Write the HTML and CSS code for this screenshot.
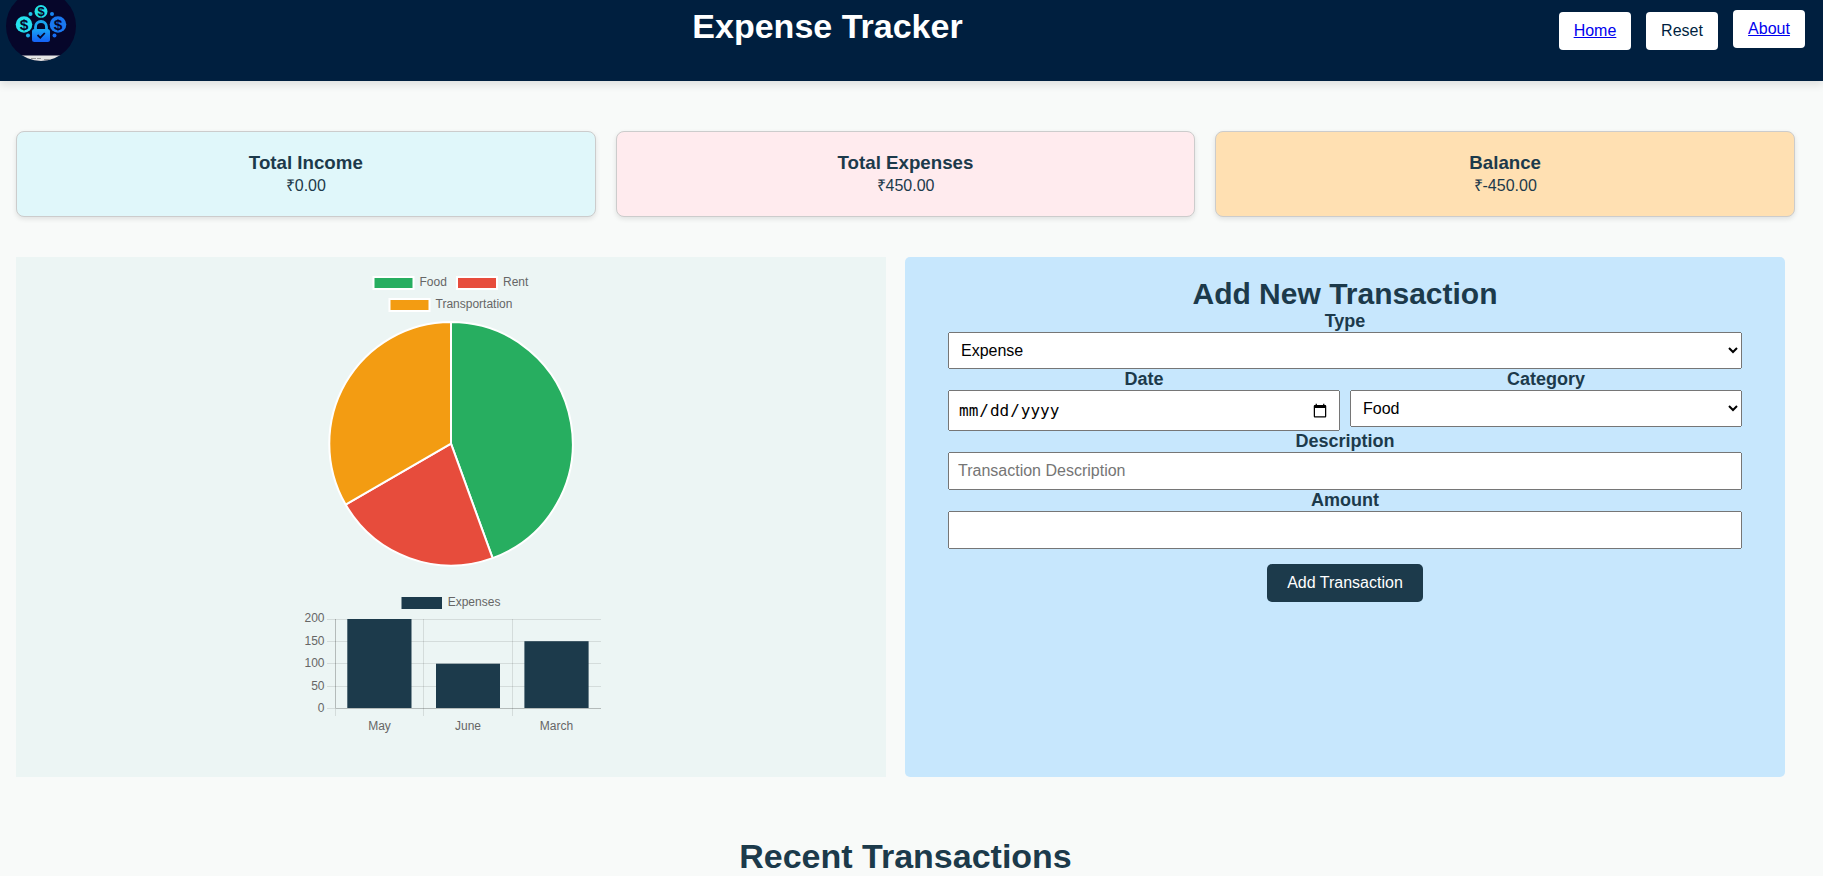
FILE: index.html
```html
<!DOCTYPE html>
<html lang="en">
<head>
<meta charset="utf-8">
<title>Expense Tracker</title>
<link rel="stylesheet" href="styles.css">
</head>
<body>
<header class="header">
  <svg class="logo" viewBox="0 0 70 70" width="70" height="70">
    <defs>
      <clipPath id="disc"><circle cx="35" cy="35" r="35"/></clipPath>
      <linearGradient id="glow" gradientUnits="userSpaceOnUse" x1="12" y1="22" x2="56" y2="40">
        <stop offset="0" stop-color="#25f0e4"/><stop offset=".5" stop-color="#1a9af0"/><stop offset="1" stop-color="#1560f5"/>
      </linearGradient>
      <linearGradient id="lock" x1="0" y1="0" x2="0" y2="1">
        <stop offset="0" stop-color="#18a5f5"/><stop offset="1" stop-color="#1560f5"/>
      </linearGradient>
    </defs>
    <g clip-path="url(#disc)">
      <rect width="70" height="70" fill="#06062a"/>
      <rect y="64.5" width="70" height="6" fill="#e4e4e4"/>
      <path d="M25 67.5h5m1 0h4m3 1h7" stroke="#999" stroke-width="1.2"/>
      <circle cx="35" cy="20.500" r="6.500" fill="#22dfe6"/>
      <circle cx="18" cy="33.500" r="8.300" fill="#25e0ee"/>
      <circle cx="52" cy="33.500" r="8.300" fill="#1a78f0"/>
      <g fill="url(#glow)"><circle cx="24.500" cy="23" r="2"/><circle cx="46" cy="23" r="2"/><circle cx="22" cy="44.500" r="2"/><circle cx="48.500" cy="44.500" r="2"/></g>
      <path d="M29.500 40v-4a5.500 5.500 0 0 1 11 0V40" fill="none" stroke="#1aa6ee" stroke-width="2.800"/>
      <rect x="26" y="38" width="18" height="13" rx="2.500" fill="url(#lock)"/>
      <path d="M31.500 44l2.800 2.700 4.500-4.700" fill="none" stroke="#06062a" stroke-width="1.800"/>
      <g class="coin"><text x="35" y="25" font-size="13">$</text><text x="18" y="39" font-size="15.500">$</text><text x="52" y="39" font-size="15.500">$</text></g>
    </g>
  </svg>
  <h1 class="brand">Expense Tracker</h1>
  <nav class="nav">
    <button class="nav-btn"><a href="#">Home</a></button>
    <button class="nav-btn">Reset</button>
    <button class="nav-btn nav-btn-raised"><a href="#">About</a></button>
  </nav>
</header>
<main class="main">
  <section class="summary">
    <div class="card income"><h3>Total Income</h3><p>₹0.00</p></div>
    <div class="card expenses"><h3>Total Expenses</h3><p>₹450.00</p></div>
    <div class="card balance"><h3>Balance</h3><p>₹-450.00</p></div>
  </section>
  <section class="panels">
    <div class="charts">
      <svg class="chart pie" width="300" height="300" viewBox="0 0 300 300">
        <g stroke="#fff" stroke-width="2">
          <rect x="72.500" y="5" width="40" height="12" fill="#27ae60"/>
          <rect x="156" y="5" width="40" height="12" fill="#e74c3c"/>
          <rect x="88.500" y="27" width="40" height="12" fill="#f39c12"/>
          <g stroke-linejoin="bevel">
            <path d="M150 171.700V50a121.700 121.700 0 0 1 41.600 236.100Z" fill="#27ae60"/>
            <path d="M150 171.700L191.600 286.100A121.700 121.700 0 0 1 44.600 232.550Z" fill="#e74c3c"/>
            <path d="M150 171.700L44.600 232.550A121.700 121.700 0 0 1 150 50Z" fill="#f39c12"/>
          </g>
        </g>
        <text x="118.500" y="14">Food</text><text x="202" y="14">Rent</text><text x="134.500" y="36">Transportation</text>
      </svg>
      <svg class="chart bar" width="300" height="150" viewBox="0 0 300 150">
        <rect x="100.500" y="6" width="40.500" height="12" fill="#1c3a4b"/>
        <text x="146.700" y="15">Expenses</text>
        <g stroke="#000" stroke-opacity=".1">
          <path d="M26 28.500H300M26 50.500H300M26 72.500H300M26 95.500H300M26 117.500H300M34.500 28V125M122.500 28V125M211.500 28V125"/>
          <path d="M34.500 28V117M35 117.500H300" stroke-opacity=".15"/>
        </g>
        <g fill="#1c3a4b"><rect x="46.300" y="28" width="64.200" height="89"/><rect x="135" y="72.700" width="64" height="44.300"/><rect x="223.400" y="50.200" width="64.200" height="66.800"/></g>
        <g text-anchor="end"><text x="23.500" y="31">200</text><text x="23.500" y="54">150</text><text x="23.500" y="76">100</text><text x="23.500" y="99">50</text><text x="23.500" y="121">0</text></g>
        <g text-anchor="middle"><text x="78.500" y="139">May</text><text x="167" y="139">June</text><text x="255.500" y="139">March</text></g>
      </svg>
    </div>
    <form class="form">
      <h2>Add New Transaction</h2>
      <label>Type</label>
      <select><option>Expense</option><option>Income</option></select>
      <div class="row">
        <div class="field"><label>Date</label><input class="date" type="date"></div>
        <div class="field"><label>Category</label><select><option>Food</option><option>Rent</option></select></div>
      </div>
      <label>Description</label>
      <input type="text" placeholder="Transaction Description">
      <label>Amount</label>
      <input type="number">
      <button class="submit" type="button">Add Transaction</button>
    </form>
  </section>
  <h2 class="recent">Recent Transactions</h2>
</main>
</body>
</html>
```
FILE: styles.css
```css
* { box-sizing: border-box; margin: 0; padding: 0; }
body {
  font-family: "Liberation Sans", Arial, sans-serif;
  font-size: 16px;
  background: #f8faf9;
  color: #1c3a4b;
  height: 876px;
  overflow: hidden;
}
.header {
  display: grid;
  grid-template-columns: 70px 1fr 246px;
  align-items: start;
  height: 81px;
  padding: 10px 18px 0 6px;
  background: #001f3f;
  box-shadow: 0 4px 8px rgba(0, 0, 0, .1);
}
.logo { margin-top: -19px; }
.coin text { font-weight: bold; text-anchor: middle; fill: #06062a; }
.brand {
  margin-top: -3px;
  padding-left: 20px;
  justify-self: center;
  font-size: 34px;
  line-height: 38px;
  color: #fff;
}
.nav { display: flex; gap: 15px; padding-top: 2px; }
.nav-btn {
  width: 72px;
  height: 38px;
  border: 0;
  border-radius: 4px;
  background: #fff;
  color: #001f3f;
  font: inherit;
}
.nav-btn-raised { margin-top: -2px; }
.nav-btn a { color: #0000ee; }
.main { padding: 50px 28px 0 16px; }
.summary { display: grid; grid-template-columns: repeat(3, 1fr); gap: 20px; }
.card {
  height: 86px;
  padding-top: 20px;
  text-align: center;
  border: 1px solid #ccc;
  border-radius: 8px;
  box-shadow: 0 2px 5px rgba(0, 0, 0, .1);
}
.card h3 { font-size: 18.72px; line-height: 22px; }
.card p { line-height: 24px; }
.income { background: #e0f7fa; }
.expenses { background: #ffebee; }
.balance { background: #ffe0b2; }
.panels { display: grid; grid-template-columns: 870px 880px; gap: 19px; height: 520px; margin-top: 40px; }
.charts { display: flex; flex-direction: column; align-items: center; gap: 19px; padding-top: 15px; background: #ecf5f4; }
.chart { display: block; font-size: 12px; }
.chart text { fill: #666; }
.form { padding: 20px 43px 0; background: #c7e7fd; border-radius: 5px; text-align: center; }
.form h2 { font-size: 30px; line-height: 34px; }
.form label { display: block; font-size: 18px; font-weight: bold; line-height: 21px; }
.form select, .form input { display: block; width: 100%; padding: 8px; font-size: 16px; font-family: inherit; }
.form select { height: 37px; }
.form input { height: 38px; }
.form .date { height: 41px; font-family: monospace; }
.row { display: flex; gap: 10px; }
.field { flex: 1; }
.submit {
  width: 156px;
  height: 38px;
  margin-top: 15px;
  border: 0;
  border-radius: 5px;
  background: #1c3a4b;
  color: #fff;
  font: inherit;
}
.recent { margin-top: 60px; font-size: 34px; line-height: 38px; text-align: center; }
```
